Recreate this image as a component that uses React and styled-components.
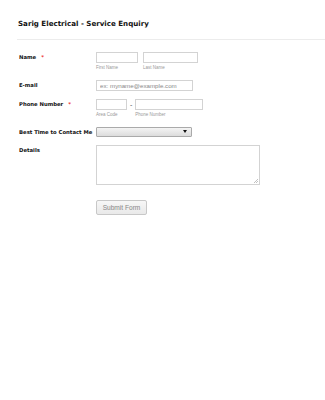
import styled, { createGlobalStyle } from 'styled-components'

const GlobalStyle = createGlobalStyle`
  html, body {
    margin: 0;
    padding: 0;
    background: #fff;
  }
  * {
    box-sizing: border-box;
  }
`

const Page = styled.div`
  width: 325px;
  min-height: 400px;
  background: #fff;
  font-family: 'DejaVu Sans', Verdana, sans-serif;
  color: #111;
`

const Header = styled.header`
  margin-left: 17px;
  padding: 19px 0 11px 1px;
  border-bottom: 1px solid #ececec;
`

const Title = styled.h1`
  margin: 0;
  font-size: 7.1px;
  line-height: 9px;
  font-weight: 700;
  color: #111;
`

const Form = styled.form`
  display: flex;
  flex-direction: column;
  padding: 12px 0 0 19px;
`

const Row = styled.div`
  display: flex;
  align-items: flex-start;
  margin-top: ${(p) => p.$gap || 0}px;
`

const Label = styled.label`
  width: 77px;
  flex-shrink: 0;
  font-size: 5.3px;
  line-height: ${(p) => p.$lh || 11}px;
  font-weight: 700;
  color: #111;
  white-space: nowrap;
`

const Required = styled.span`
  color: #e33;
  margin-left: 5px;
  font-weight: 700;
`

const Fields = styled.div`
  display: flex;
  align-items: flex-start;
  gap: ${(p) => p.$gap || 5}px;
`

const Field = styled.div`
  display: flex;
  flex-direction: column;
`

const Input = styled.input`
  width: ${(p) => p.$w}px;
  height: 11px;
  margin: 0;
  padding: 0 3px;
  border: 1px solid #d3d3d3;
  border-radius: 0;
  background: #fff;
  font-family: 'Liberation Sans', Arial, sans-serif;
  font-size: 6.2px;
  color: #333;
  outline: none;

  &::placeholder {
    color: #888;
  }
`

const SubLabel = styled.span`
  margin-top: 2px;
  font-family: 'Liberation Sans', Arial, sans-serif;
  font-size: 4.5px;
  line-height: 5px;
  color: #999;
`

const Dash = styled.span`
  font-family: 'Liberation Sans', Arial, sans-serif;
  font-size: 7px;
  line-height: 11px;
  color: #555;
`

const SelectBox = styled.div`
  position: relative;
  width: 96px;
  height: 10px;
  border: 1px solid #aaa;
  border-radius: 1px;
  background: linear-gradient(#f4f4f4, #dcdcdc);
`

const Arrow = styled.span`
  position: absolute;
  right: 4px;
  top: 2px;
  width: 0;
  height: 0;
  border-left: 2px solid transparent;
  border-right: 2px solid transparent;
  border-top: 3px solid #111;
`

const TextArea = styled.div`
  position: relative;
  width: 164px;
  height: 40px;
  border: 1px solid #d3d3d3;
  background: #fff;
`

const Grip = styled.svg`
  position: absolute;
  right: 1px;
  bottom: 1px;
`

const ButtonRow = styled.div`
  padding-left: 77px;
  margin-top: 10px;
`

const SubmitButton = styled.button`
  width: 51px;
  height: 15px;
  padding: 0;
  border: 1px solid #c8c8c8;
  border-radius: 2px;
  background: linear-gradient(#f7f7f7, #e9e9e9);
  font-family: 'Liberation Sans', Arial, sans-serif;
  font-size: 6.6px;
  color: #888;
`

export default function App() {
  return (
    <Page>
      <GlobalStyle />
      <Header>
        <Title>Sarig Electrical - Service Enquiry</Title>
      </Header>
      <Form onSubmit={(e) => e.preventDefault()}>
        <Row>
          <Label>
            Name<Required>*</Required>
          </Label>
          <Fields>
            <Field>
              <Input $w={42} />
              <SubLabel>First Name</SubLabel>
            </Field>
            <Field>
              <Input $w={55} />
              <SubLabel>Last Name</SubLabel>
            </Field>
          </Fields>
        </Row>

        <Row $gap={10}>
          <Label>E-mail</Label>
          <Input $w={97} placeholder="ex: myname@example.com" />
        </Row>

        <Row $gap={8}>
          <Label>
            Phone Number<Required>*</Required>
          </Label>
          <Fields $gap={3}>
            <Field>
              <Input $w={31} />
              <SubLabel>Area Code</SubLabel>
            </Field>
            <Dash>-</Dash>
            <Field>
              <Input $w={68} />
              <SubLabel>Phone Number</SubLabel>
            </Field>
          </Fields>
        </Row>

        <Row $gap={10}>
          <Label $lh={10}>Best Time to Contact Me</Label>
          <SelectBox>
            <Arrow />
          </SelectBox>
        </Row>

        <Row $gap={8}>
          <Label>Details</Label>
          <TextArea>
            <Grip width="5" height="5" viewBox="0 0 5 5">
              <path d="M1 5 L5 1 M3 5 L5 3" stroke="#999" strokeWidth="0.6" />
            </Grip>
          </TextArea>
        </Row>

        <ButtonRow>
          <SubmitButton type="submit">Submit Form</SubmitButton>
        </ButtonRow>
      </Form>
    </Page>
  )
}
